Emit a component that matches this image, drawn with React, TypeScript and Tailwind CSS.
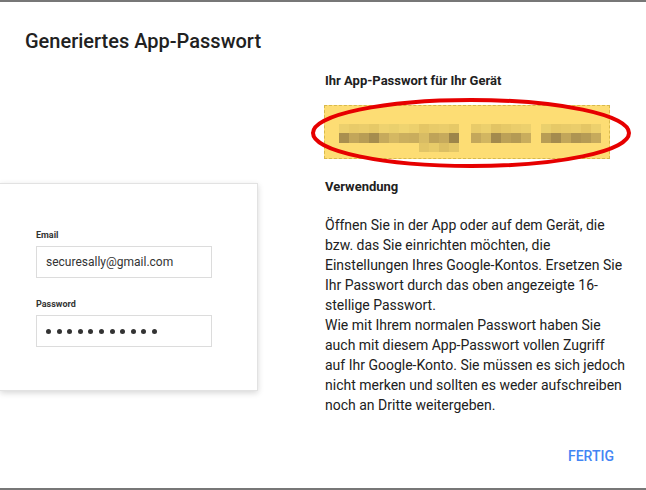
const blockRows: { y: number; h: number; cells: [number, string][] }[] = [
  {
    y: 0,
    h: 9,
    cells: [
      [338, "#ecd06d"], [348, "#e8cb69"], [358, "#eacd6b"], [368, "#e6c967"], [378, "#eed26f"], [388, "#ead06d"], [398, "#efd470"], [408, "#ecd06d"], [418, "#e4c665"], [428, "#e8cb69"], [438, "#eacd6b"], [448, "#e6c967"],
      [470, "#e8cb69"], [480, "#ecd06d"], [490, "#e2c464"], [500, "#e6c967"], [510, "#eacd6b"], [520, "#ecd06d"],
      [540, "#ead06d"], [550, "#e6c967"], [560, "#e8cb69"], [570, "#eacd6b"], [580, "#e4c665"], [590, "#ecd06d"],
    ],
  },
  {
    y: 9,
    h: 10,
    cells: [
      [338, "#a98f4f"], [348, "#c2a65a"], [358, "#b89d55"], [368, "#a68d4e"], [378, "#c6aa5c"], [388, "#d4b862"], [398, "#cbaf5e"], [408, "#c9ad5d"], [418, "#d8bc64"], [428, "#bfa358"], [438, "#c6aa5c"], [448, "#9d854a"],
      [470, "#c4a85b"], [480, "#d2b661"], [490, "#a38a4d"], [500, "#bca157"], [510, "#b49a54"], [520, "#c9ad5d"],
      [540, "#b89d55"], [550, "#a48b4e"], [560, "#c2a65a"], [570, "#ae9452"], [580, "#b59b55"], [590, "#c6aa5c"],
    ],
  },
  {
    y: 19,
    h: 9,
    cells: [
      [418, "#e2c566"], [428, "#e8cb69"], [438, "#dcbf63"], [448, "#e4c767"],
    ],
  },
];

function BlurredPassword() {
  return (
    <svg className="absolute left-0 top-0" width="290" height="60" viewBox="324 103 290 60">
      {blockRows.map((row, ri) =>
        row.cells.map(([x, c], ci) => (
          <rect key={`${ri}-${ci}`} x={x} y={121 + row.y} width="10" height={row.h} fill={c} />
        ))
      )}
    </svg>
  );
}

function LoginCard() {
  return (
    <div className="mt-[130px] h-[208px] w-[258px] border border-l-0 border-[#e2e2e2] bg-white pl-[36px] pt-[45px] shadow-[0_2px_6px_rgba(0,0,0,0.16)]">
      <div className="text-[9px] font-bold leading-[12px] text-[#333]">Email</div>
      <div className="mt-[5px] flex h-[32px] w-[176px] items-center border border-[#dcdcdc] pl-[9px] text-[12px] text-[#333]">
        securesally@gmail.com
      </div>
      <div className="mt-[20px] text-[9px] font-bold leading-[12px] text-[#333]">Password</div>
      <div className="mt-[5px] flex h-[32px] w-[176px] items-center gap-[5.6px] border border-[#dcdcdc] pl-[9px]">
        {Array.from({ length: 11 }).map((_, i) => (
          <span key={i} className="h-[5px] w-[5px] rounded-full bg-[#333]" />
        ))}
      </div>
    </div>
  );
}

export default function App() {
  return (
    <div
      className="flex h-[490px] w-[646px] flex-col overflow-hidden border-y-2 border-[#777] bg-white text-[#212121]"
      style={{ fontFamily: "Roboto, 'Liberation Sans', sans-serif" }}
    >
      <h1 className="pl-[25px] pt-[27px] text-[20px] font-medium leading-[24px]">Generiertes App-Passwort</h1>

      <div className="flex">
        <div className="w-[324px]">
          <LoginCard />
        </div>

        <div className="w-[302px] pl-[1px]">
          <h2 className="mt-[19px] text-[13px] font-bold leading-[18px]">Ihr App-Passwort für Ihr Gerät</h2>

          <div className="relative mt-[15px] h-[54px] w-[286px] -translate-x-px border border-dashed border-[#d8b94c] bg-[#fddd74]">
            <BlurredPassword />
            <svg className="absolute left-[-15px] top-[-9px] overflow-visible" width="322" height="72" viewBox="0 0 322 72">
              <ellipse cx="161" cy="36" rx="158" ry="33" fill="none" stroke="#e60000" strokeWidth="4" />
            </svg>
          </div>

          <h2 className="mt-[19px] text-[13px] font-bold leading-[18px]">Verwendung</h2>

          <p className="mt-[19px] text-[14px] leading-[20px]">
            Öffnen Sie in der App oder auf dem Gerät, die bzw. das Sie einrichten möchten, die Einstellungen Ihres
            Google-Kontos. Ersetzen Sie Ihr Passwort durch das oben angezeigte 16-stellige Passwort.
            <br />
            Wie mit Ihrem normalen Passwort haben Sie auch mit diesem App-Passwort vollen Zugriff auf Ihr Google-Konto.
            Sie müssen es sich jedoch nicht merken und sollten es weder aufschreiben noch an Dritte weitergeben.
          </p>
        </div>
      </div>

      <div className="mt-auto flex justify-end pb-[24px] pr-[32px]">
        <button className="text-[14px] font-medium leading-[16px] text-[#4285f4]">FERTIG</button>
      </div>
    </div>
  );
}
